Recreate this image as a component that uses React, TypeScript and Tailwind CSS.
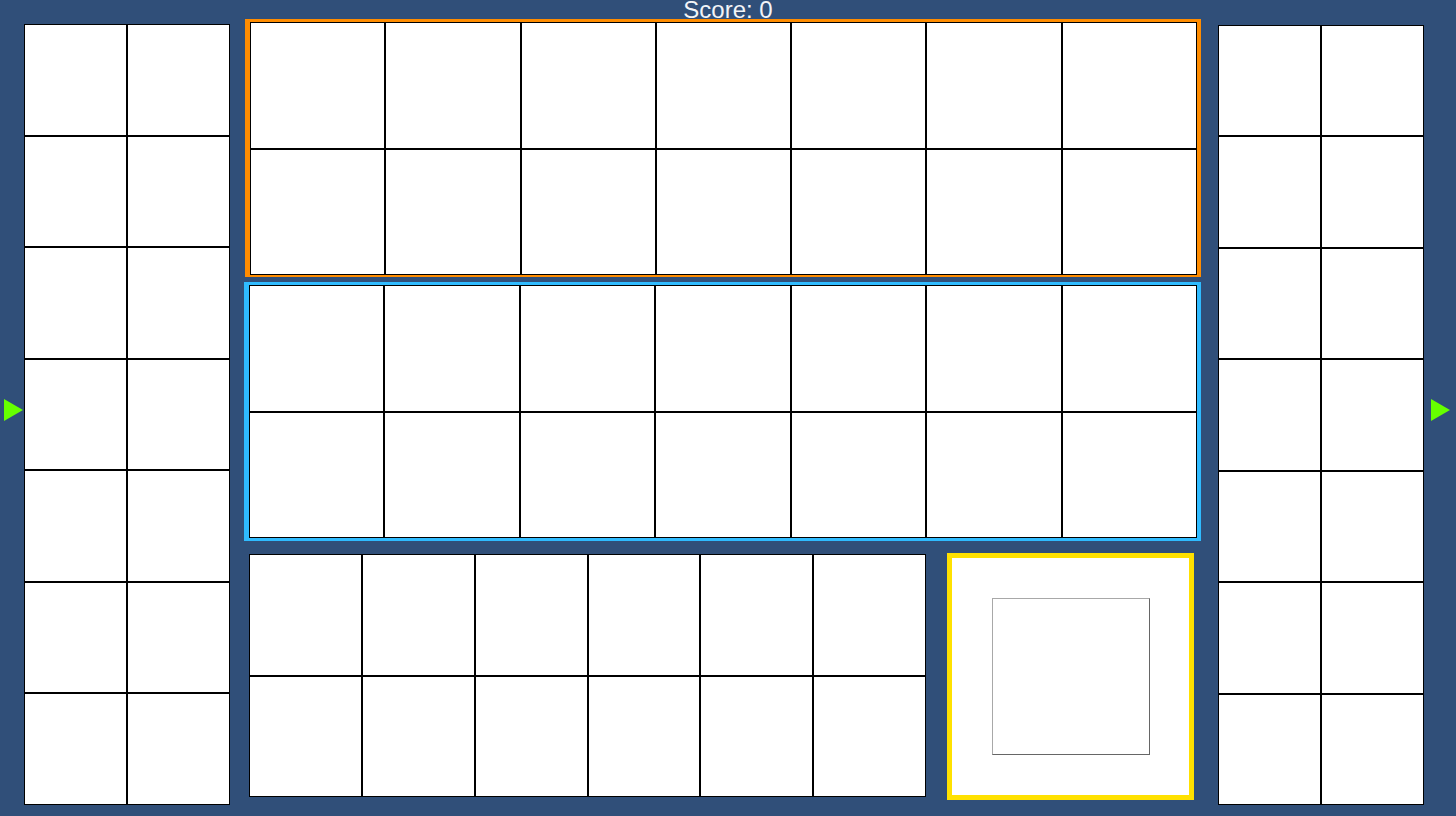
const Cell: React.FC = () => <div className="bg-white border border-black" />;

const Grid: React.FC<{ cols: string; rows: string; count: number; className?: string }> = ({ cols, rows, count, className }) => (
  <div className={`grid ${cols} ${rows} ${className ?? ""}`}>
    {Array.from({ length: count }).map((_, i) => (
      <Cell key={i} />
    ))}
  </div>
);

const Arrow: React.FC = () => (
  <svg width="19" height="22" viewBox="0 0 19 22">
    <polygon points="0,0 19,11 0,22" fill="#66ff00" />
  </svg>
);

export default function App() {
  return (
    <div
      className="relative flex w-[1456px] h-[816px] overflow-hidden bg-[#304f79]"
      style={{ fontFamily: '"Liberation Sans", Arial, sans-serif' }}
    >
      {/* score */}
      <div className="absolute left-0 right-0 top-0 text-center text-[24px] leading-[20px] text-[#f2f4f7]">
        Score: 0
      </div>

      {/* left arrow */}
      <div className="w-[24px] shrink-0 pt-[399px] pl-[4px]">
        <Arrow />
      </div>

      {/* left column */}
      <Grid cols="grid-cols-2" rows="grid-rows-7" count={14} className="mt-[24px] w-[206px] h-[781px] shrink-0" />

      {/* center */}
      <div className="ml-[14px] w-[957px] shrink-0 pt-[19px] flex flex-col">
        <div className="ml-[1px] w-[956px] h-[258px] border-[#ff8c00] border-l-[5px] border-t-[3px] border-r-[4px] border-b-[2px]">
          <Grid cols="grid-cols-7" rows="grid-rows-2" count={14} className="w-full h-full" />
        </div>
        <div className="mt-[5px] w-[957px] h-[259px] border-[#2fbbff] border-l-[5px] border-t-[3px] border-r-[4px] border-b-[3px]">
          <Grid cols="grid-cols-7" rows="grid-rows-2" count={14} className="w-full h-full" />
        </div>
        <div className="mt-[12px] flex items-start">
          <Grid cols="grid-cols-6" rows="grid-rows-2" count={12} className="mt-[1px] ml-[5px] w-[677px] h-[243px]" />
          <div className="ml-[21px] w-[247px] h-[247px] bg-white border-[5px] border-[#ffe100] flex items-center justify-center">
            <div className="w-[158px] h-[157px] border border-[#a8a8a8] border-r-[#666] border-b-[#666]" />
          </div>
        </div>
      </div>

      {/* right column */}
      <Grid cols="grid-cols-2" rows="grid-rows-7" count={14} className="ml-[17px] mt-[25px] w-[206px] h-[780px] shrink-0" />

      {/* right arrow */}
      <div className="w-[32px] shrink-0 pt-[399px] pl-[7px]">
        <Arrow />
      </div>
    </div>
  );
}
